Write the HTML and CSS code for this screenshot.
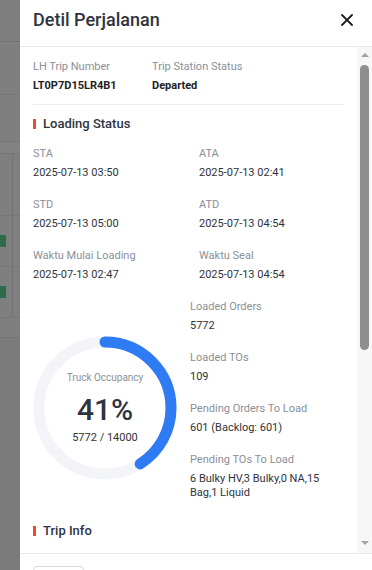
FILE: index.html
```html
<!DOCTYPE html>
<html lang="id">
<head>
  <meta charset="UTF-8">
  <meta name="viewport" content="width=device-width, initial-scale=1.0">
  <title>Detil Perjalanan</title>
  <link rel="stylesheet" href="styles.css">
</head>
<body>
<div class="backdrop">
  <div class="bg-head"></div>
  <div class="bg-search"></div>
  <div class="bg-tabs"></div>
  <div class="bg-thead"></div>
  <div class="bg-row bg-row-first"><div class="bg-cell"></div></div>
  <div class="bg-row"><div class="bg-cell"><span class="bg-bar"></span></div></div>
  <div class="bg-row"><div class="bg-cell"><span class="bg-bar"></span></div></div>
  <div class="bg-foot"></div>
</div>

<div class="drawer">
  <div class="drawer-header">
    <h1>Detil Perjalanan</h1>
    <button class="close-btn" aria-label="Tutup">
      <svg width="12" height="12" viewBox="0 0 12 12">
        <path d="M1 1 L11 11 M11 1 L1 11" stroke="#1f1f1f" stroke-width="1.8" stroke-linecap="round"/>
      </svg>
    </button>
  </div>

  <div class="drawer-body">
    <div class="content">
      <div class="trip-head">
        <div>
          <div class="field-label">LH Trip Number</div>
          <div class="field-value strong">LT0P7D15LR4B1</div>
        </div>
        <div>
          <div class="field-label">Trip Station Status</div>
          <div class="field-value strong">Departed</div>
        </div>
      </div>

      <h2 class="section-title">Loading Status</h2>

      <div class="time-grid">
        <div>
          <div class="field-label">STA</div>
          <div class="field-value">2025-07-13 03:50</div>
        </div>
        <div>
          <div class="field-label">ATA</div>
          <div class="field-value">2025-07-13 02:41</div>
        </div>
        <div>
          <div class="field-label">STD</div>
          <div class="field-value">2025-07-13 05:00</div>
        </div>
        <div>
          <div class="field-label">ATD</div>
          <div class="field-value">2025-07-13 04:54</div>
        </div>
        <div>
          <div class="field-label">Waktu Mulai Loading</div>
          <div class="field-value">2025-07-13 02:47</div>
        </div>
        <div>
          <div class="field-label">Waktu Seal</div>
          <div class="field-value">2025-07-13 04:54</div>
        </div>
      </div>

      <div class="occupancy">
        <div class="donut">
          <svg width="144" height="144" viewBox="0 0 144 144">
            <circle cx="72" cy="72" r="66" fill="none" stroke="#f2f4f8" stroke-width="11"/>
            <circle cx="72" cy="72" r="66" fill="none" stroke="#2f7bf3" stroke-width="11"
                    stroke-linecap="round" stroke-dasharray="170 415" transform="rotate(-90 72 72)"/>
          </svg>
          <div class="donut-text">
            <div class="donut-label">Truck Occupancy</div>
            <div class="donut-percent">41%</div>
            <div class="donut-count">5772 / 14000</div>
          </div>
        </div>

        <div class="load-stats">
          <div class="stat">
            <div class="field-label">Loaded Orders</div>
            <div class="stat-value">5772</div>
          </div>
          <div class="stat">
            <div class="field-label">Loaded TOs</div>
            <div class="stat-value">109</div>
          </div>
          <div class="stat">
            <div class="field-label">Pending Orders To Load</div>
            <div class="stat-value">601 (Backlog: 601)</div>
          </div>
          <div class="stat">
            <div class="field-label">Pending TOs To Load</div>
            <div class="stat-value">6 Bulky HV,3 Bulky,0 NA,15 Bag,1 Liquid</div>
          </div>
        </div>
      </div>

      <h2 class="section-title trip-info">Trip Info</h2>
    </div>

    <div class="scrollbar">
      <span class="scroll-up"></span>
      <span class="scroll-thumb"></span>
      <span class="scroll-down"></span>
    </div>
  </div>

  <div class="drawer-footer">
    <button class="footer-btn" aria-label="Tutup"></button>
  </div>
</div>
</body>
</html>
```

FILE: styles.css
```css
html, body {
  margin: 0;
  padding: 0;
}
body {
  width: 372px;
  height: 570px;
  overflow: hidden;
  display: flex;
  font-family: Roboto, "Liberation Sans", Arial, sans-serif;
  color: #333;
  background-color: #7c7c7c;
}

/* dimmed page behind the drawer */
.backdrop {
  width: 20px;
  flex: none;
  display: flex;
  flex-direction: column;
  background-color: #7a7a7a;
}
.bg-head {
  height: 41px;
  background-color: #7e7e7e;
  border-bottom: 1px solid #747474;
}
.bg-search {
  height: 52px;
  background-color: #7f7f7f;
  border-bottom: 1px solid #777;
}
.bg-tabs {
  height: 46px;
  background-color: #7f7f7f;
  border-bottom: 1px solid #777;
}
.bg-thead {
  height: 11px;
  background-color: #828282;
  border-bottom: 1px solid #777;
}
.bg-row {
  height: 50px;
  display: flex;
  background-color: #7f7f7f;
  border-bottom: 1px solid #777;
}
.bg-row-first {
  height: 61px;
}
.bg-cell {
  width: 12px;
  border-right: 1px solid #737373;
  display: flex;
  align-items: center;
}
.bg-bar {
  width: 6px;
  height: 12px;
  background-color: #2e6b48;
}
.bg-foot {
  height: 19px;
  background-color: #7f7f7f;
  border-bottom: 1px solid #777;
}

/* drawer */
.drawer {
  flex: 1;
  height: 570px;
  overflow: hidden;
  background-color: #fff;
  display: flex;
  flex-direction: column;
}
.drawer-header {
  height: 47px;
  flex: none;
  box-sizing: border-box;
  padding: 8px 13px 0 13px;
  display: flex;
  justify-content: space-between;
  align-items: flex-start;
  border-bottom: 1px solid #e6e8ee;
}
.drawer-header h1 {
  margin: 0;
  font-size: 18px;
  line-height: 24px;
  font-weight: 500;
  color: #2e3440;
}
.close-btn {
  margin-top: 6px;
  margin-right: 6px;
  padding: 0;
  border: none;
  background: none;
  width: 12px;
  height: 12px;
  display: flex;
}

.drawer-body {
  height: 506px;
  flex: none;
  display: flex;
  overflow: hidden;
}
.content {
  flex: 1;
  padding: 12px 13px 0 13px;
}

.field-label {
  font-size: 11px;
  line-height: 16px;
  color: #8a8f99;
}
.field-value {
  margin-top: 3px;
  font-size: 11px;
  line-height: 16px;
  color: #2f333a;
}
.field-value.strong {
  font-weight: 700;
  color: #222;
}

.trip-head {
  display: grid;
  grid-template-columns: 119px 1fr;
  padding-bottom: 10px;
  border-bottom: 1px solid #eceef2;
}

.section-title {
  margin: 10px 0 0 0;
  font-size: 13px;
  line-height: 18px;
  font-weight: 500;
  color: #2e3440;
  display: flex;
  align-items: center;
}
.section-title::before {
  content: "";
  width: 3px;
  height: 10px;
  margin-right: 7px;
  background-color: #ea4d2c;
}

.time-grid {
  margin-top: 13px;
  display: grid;
  grid-template-columns: 166px 1fr;
  row-gap: 16px;
}

.occupancy {
  margin-top: 16px;
  display: grid;
  grid-template-columns: 157px 1fr;
  align-items: center;
}
.donut {
  margin-top: 17px;
  width: 144px;
  height: 144px;
  display: grid;
}
.donut svg,
.donut-text {
  grid-area: 1 / 1;
}
.donut-text {
  display: flex;
  flex-direction: column;
  align-items: center;
  justify-content: center;
}
.donut-label {
  font-size: 10px;
  line-height: 14px;
  color: #8a8f99;
}
.donut-percent {
  margin-top: 7px;
  font-size: 30px;
  line-height: 36px;
  font-weight: 500;
  color: #2e3440;
}
.donut-count {
  margin-top: 3px;
  font-size: 11px;
  line-height: 14px;
  color: #333;
}

.stat + .stat {
  margin-top: 17px;
}
.stat-value {
  margin-top: 4px;
  font-size: 11px;
  line-height: 14px;
  color: #2f333a;
}

.trip-info {
  margin-top: 22px;
}

/* fake classic scrollbar */
.scrollbar {
  width: 15px;
  flex: none;
  background-color: #f7f7f7;
  display: flex;
  flex-direction: column;
  align-items: center;
}
.scroll-up,
.scroll-down {
  width: 0;
  height: 0;
  border-left: 4px solid transparent;
  border-right: 4px solid transparent;
}
.scroll-up {
  margin-top: 6px;
  border-bottom: 4px solid #a3a3a3;
}
.scroll-thumb {
  margin-top: 8px;
  width: 9px;
  height: 285px;
  border-radius: 5px;
  background-color: #8e8e8e;
}
.scroll-down {
  margin-top: auto;
  margin-bottom: 8px;
  border-top: 4px solid #a3a3a3;
}

.drawer-footer {
  flex: none;
  border-top: 1px solid #e6e8ee;
  padding: 12px 13px;
}
.footer-btn {
  display: block;
  width: 51px;
  height: 32px;
  border: 1px solid #d9d9d9;
  border-radius: 4px;
  background-color: #fff;
}
```
